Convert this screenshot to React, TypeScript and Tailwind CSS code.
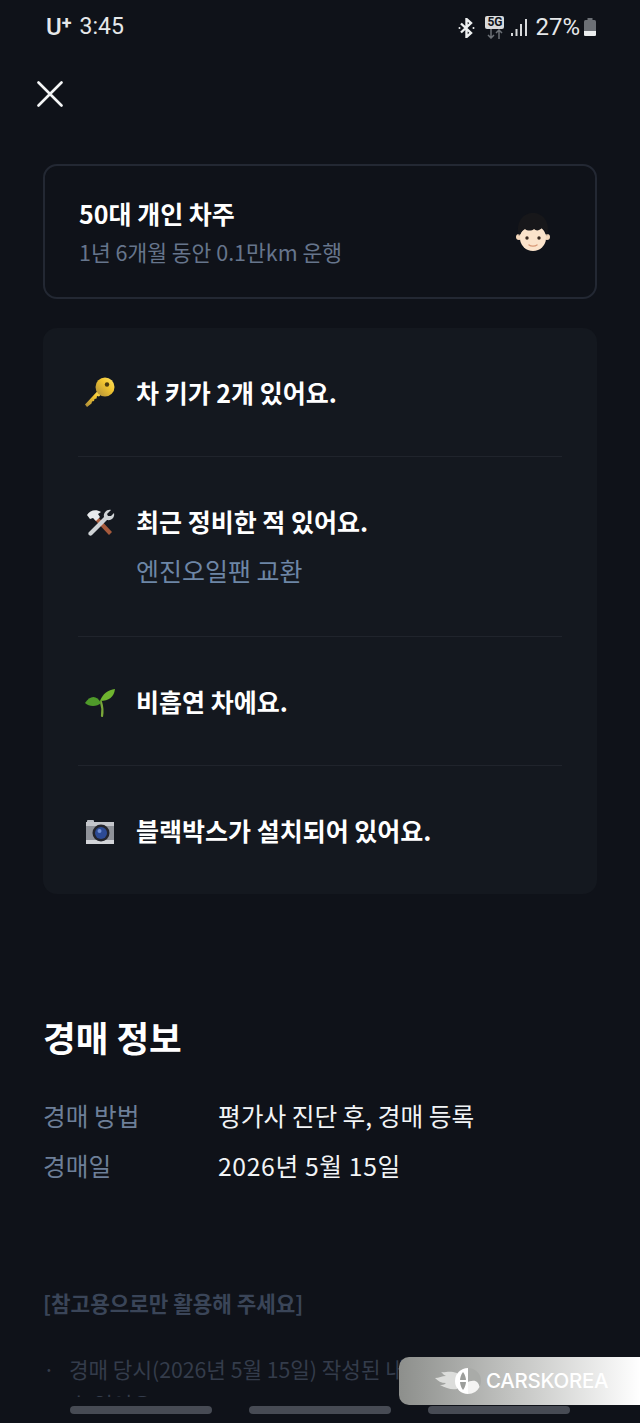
const KR = "font-['Noto_Sans_CJK_KR','Noto_Sans',sans-serif]";

function KeyIcon() {
  return (
    <svg width="32" height="32" viewBox="0 0 32 32">
      <defs>
        <linearGradient id="keyGold" x1="0" y1="1" x2="1" y2="0">
          <stop offset="0" stopColor="#a98a3a" />
          <stop offset="0.6" stopColor="#f2c530" />
          <stop offset="1" stopColor="#ffe56a" />
        </linearGradient>
      </defs>
      <path d="M3 30l-2-2.500L14.500 13l3.500 3.500-3 3-2-.5-.5 2.500-2 .5-.5 2-2 .5-.5 2z" fill="url(#keyGold)" />
      <circle cx="21" cy="10" r="9.500" fill="url(#keyGold)" />
      <circle cx="23" cy="7.500" r="2.200" fill="#4a3a10" />
    </svg>
  );
}

function ToolsIcon() {
  return (
    <svg width="32" height="32" viewBox="0 0 32 32">
      <path d="M10 13l3-3 15 16-3 3z" fill="#a65a3c" />
      <path d="M27 4l-4 4 1 2 3 0 3-3c1 4-2 8-7 7L8 29c-2 2-5-1-3-3l15-15c-1-4 3-8 7-7z" fill="#cfd3d6" />
      <path d="M3 9c3-5 9-6 14-3l-3 2 2 3-4 4-3-3-3 1-3-4z" fill="#e8eaec" />
    </svg>
  );
}

function SproutIcon() {
  return (
    <svg width="32" height="32" viewBox="0 0 32 32">
      <path d="M18 30c1-6 0-11-1-14" stroke="#7aa73a" strokeWidth="2.200" fill="none" strokeLinecap="round" />
      <path d="M16 15C19 7 24 4 31 3c-1 8-6 12-15 12z" fill="#6fb52f" />
      <path d="M17 17C13 9 6 9 1 17c4 4 12 4 16 0z" fill="#4f9a2a" />
    </svg>
  );
}

function CameraIcon() {
  return (
    <svg width="32" height="32" viewBox="0 0 32 32">
      <rect x="3" y="5" width="7" height="4" rx="1" fill="#b9bcc2" />
      <rect x="2" y="7" width="28" height="22" rx="1.500" fill="#8f9299" />
      <rect x="2" y="7" width="28" height="4" fill="#c4c6cb" />
      <rect x="2" y="25" width="28" height="4" fill="#d3d5d9" />
      <circle cx="17" cy="18" r="8.500" fill="#23242b" />
      <circle cx="17" cy="18" r="6" fill="#2c4a94" />
      <circle cx="15.500" cy="16" r="2" fill="#6f8fd6" />
    </svg>
  );
}

function BoyIcon() {
  return (
    <svg width="36" height="40" viewBox="0 0 36 40">
      <circle cx="4" cy="25" r="3" fill="#f5d9bd" />
      <circle cx="32" cy="25" r="3" fill="#f5d9bd" />
      <ellipse cx="18" cy="26" rx="13" ry="13" fill="#fbe3cb" />
      <path d="M4 24C0 9 9 1 18 1s18 8 14 23c-1-4-2-6-5-8-3 3-6 3-8 1-2 2-7 2-9 0-3 2-5 4-6 7z" fill="#17171a" />
      <circle cx="12" cy="26" r="1.700" fill="#3a2a20" />
      <circle cx="24" cy="26" r="1.700" fill="#3a2a20" />
      <path d="M14 33c2 1.500 6 1.500 8 0" stroke="#d99a78" strokeWidth="1.400" fill="none" strokeLinecap="round" />
    </svg>
  );
}

function StatusBar() {
  return (
    <div className="h-[54px] pl-[46px] pr-[44px] flex items-center justify-between text-[#e6e8ea] font-['Roboto',sans-serif]">
      <div className="flex items-center text-[24px]">
        <span className="font-medium text-[24px]">U</span>
        <span className="font-bold text-[18px] -mt-[10px]">+</span>
        <span className="ml-[8px] text-[23px]">3:45</span>
      </div>
      <div className="flex items-center">
        {/* bluetooth with the two side dots */}
        <svg className="mt-[2px]" width="17" height="20" viewBox="0 0 17 20" fill="none" stroke="#eef0f1" strokeWidth="2.400">
          <path d="M3 5.500l10 9.500-4.500 4V1L13 5l-10 9.500" />
          <circle cx="1.500" cy="10" r="1" fill="#eef0f1" stroke="none" />
          <circle cx="15.500" cy="10" r="1" fill="#eef0f1" stroke="none" />
        </svg>
        <div className="ml-[10px] w-[19px] flex flex-col items-center">
          <span className="w-[19px] h-[13px] bg-[#d8dadc] text-[#10141b] text-[12px] font-bold leading-[13px] text-center rounded-[2px]">5G</span>
          <svg width="16" height="10" viewBox="0 0 16 10" fill="none" stroke="#6c7076" strokeWidth="1.500">
            <path d="M4 0v9M1 6l3 3 3-3M12 10V1M9 4l3-3 3 3" />
          </svg>
        </div>
        <svg className="ml-[7px]" width="16" height="17" viewBox="0 0 16 17" fill="#d8dadc">
          <rect x="0" y="14" width="2" height="3" />
          <rect x="4.500" y="10" width="2" height="7" />
          <rect x="9" y="5" width="2" height="12" />
          <rect x="14" y="0" width="2" height="17" />
        </svg>
        <span className="ml-[8px] text-[24px] leading-none">27%</span>
        <svg className="ml-[4px]" width="12" height="18" viewBox="0 0 12 18">
          <rect x="3.500" y="0" width="5" height="2" fill="#6c7076" />
          <rect x="0" y="2" width="12" height="16" rx="1.500" fill="#6c7076" />
          <path d="M0 13h12v3.500a1.500 1.500 0 0 1-1.500 1.500h-9A1.500 1.500 0 0 1 0 16.500z" fill="#eceeef" />
        </svg>
      </div>
    </div>
  );
}

const Divider = () => <div className="h-px bg-[#20242c] mx-[35px]" />;

function FeatureRow({ icon, title, sub }: { icon: React.ReactNode; title: string; sub?: string }) {
  return (
    <div className="flex pl-[41px] pr-[35px] py-[46px] gap-[20px]">
      <div className="w-[32px] h-[36px] pt-[2px] flex items-center justify-center shrink-0">{icon}</div>
      <div>
        <p className="text-[25px] leading-[36px] font-bold text-white">{title}</p>
        {sub && <p className="mt-[13px] mb-[2px] text-[25px] leading-[36px] text-[#6d86a6]">{sub}</p>}
      </div>
    </div>
  );
}

function InfoRow({ label, value, wide }: { label: string; value: string; wide?: boolean }) {
  return (
    <div className="flex text-[24.7px] leading-[36px]">
      <span className="w-[175px] text-[#6d7f98]">{label}</span>
      <span className={wide ? "text-[#f2f4f6] tracking-[0.65px]" : "text-[#f2f4f6]"}>{value}</span>
    </div>
  );
}

function Watermark() {
  return (
    <div className="absolute left-[399px] right-0 top-[1357px] h-[48px] rounded-l-[10px] bg-gradient-to-r from-[#8d8f8c] via-[#c6c7c5] to-white flex items-center pl-[36px]">
      <svg width="47" height="28" viewBox="0 0 47 28">
        <path d="M22 6C14 3 10 6 6 5c2 2 3 3 5 4-4 0-7 2-11 2 3 3 6 5 11 5-2 2-4 2-6 2 6 3 11 5 17 4z" fill="#dcdddb" />
        <path d="M33 1a13 13 0 0 0 0 26z" fill="#fff" />
        <path d="M33 1a13 13 0 0 1 13 13c0 2-.5 4-1.500 6-1-4-4-7-8-6-2 .5-3 1-3.500 1z" fill="#a9aba8" />
        <path d="M33 15c1-1 3-1 4-1 4-1 7 2 7.500 6A13 13 0 0 1 33 27z" fill="#f4f4f3" />
        <path d="M28 5c-4 5-4 13 0 18 4-5 4-13 0-18z" fill="#9c9e9b" />
        <path d="M24 13h8v2h-8z" fill="#fff" />
      </svg>
      <span className="ml-[4px] text-[20.5px] font-medium text-white font-['Inter',sans-serif] tracking-[-0.3px]">CARSKOREA</span>
    </div>
  );
}

export default function App() {
  return (
    <div className={`relative h-[1423px] w-[640px] overflow-hidden bg-[#0f1219] ${KR}`}>
      <StatusBar />

      <div className="pl-[37px] pt-[27px]">
        <svg className="block" width="26" height="26" viewBox="0 0 26 26" stroke="#f4f5f6" strokeWidth="2.600" strokeLinecap="round">
          <path d="M1.500 1.500l23 23M24.500 1.500l-23 23" />
        </svg>
      </div>

      <main className="px-[43px] pt-[57px]">
        <section className="h-[135px] rounded-[14px] border-2 border-[#232833] pl-[34px] pr-[44px] flex items-center justify-between">
          <div className="pt-[2px]">
            <p className="text-[25px] leading-[36px] font-bold text-white">50대 개인 차주</p>
            <p className="mt-[3px] text-[21.500px] leading-[36px] text-[#66758c]">1년 6개월 동안 0.1만km 운행</p>
          </div>
          <BoyIcon />
        </section>

        <section className="mt-[29px] rounded-[14px] bg-[#14181f]">
          <FeatureRow icon={<KeyIcon />} title="차 키가 2개 있어요." />
          <Divider />
          <FeatureRow icon={<ToolsIcon />} title="최근 정비한 적 있어요." sub="엔진오일팬 교환" />
          <Divider />
          <FeatureRow icon={<SproutIcon />} title="비흡연 차에요." />
          <Divider />
          <FeatureRow icon={<CameraIcon />} title="블랙박스가 설치되어 있어요." />
        </section>

        <h2 className="mt-[118px] text-[35.500px] leading-[50px] font-bold text-white">경매 정보</h2>

        <div className="mt-[35px] flex flex-col gap-[14px]">
          <InfoRow label="경매 방법" value="평가사 진단 후, 경매 등록" />
          <InfoRow label="경매일" value="2026년 5월 15일" wide />
        </div>

        <p className="mt-[104px] text-[21.250px] leading-[32px] font-bold text-[#3a4558]">[참고용으로만 활용해 주세요]</p>

        <div className="mt-[32px] flex text-[21.250px] leading-[35px] text-[#343c4b]">
          <span className="w-[26px] shrink-0">·</span>
          <p>경매 당시(2026년 5월 15일) 작성된 내용으로, 현재와 다를 수 있어요.</p>
        </div>
      </main>

      {/* bottom nav covers whatever scrolls under it */}
      <div className="absolute left-0 right-0 top-[1397px] bottom-0 bg-[#0f1219] flex justify-center gap-[37px] pt-[9px]">
        <div className="w-[142px] h-[8px] rounded-full bg-[#474b54]" />
        <div className="w-[142px] h-[8px] rounded-full bg-[#474b54]" />
        <div className="w-[142px] h-[8px] rounded-full bg-[#474b54]" />
      </div>

      <Watermark />
    </div>
  );
}
